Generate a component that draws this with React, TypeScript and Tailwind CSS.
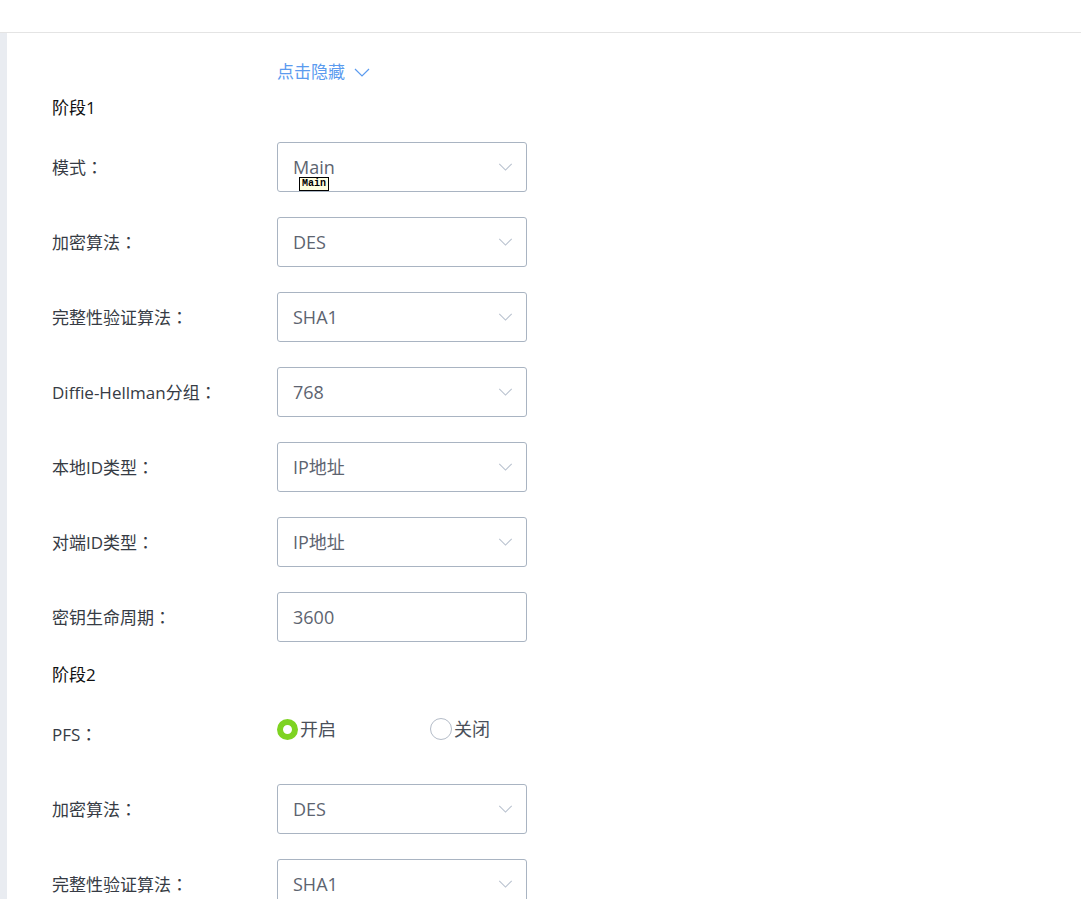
import React from 'react';

const font = { fontFamily: '"Open Sans", "Noto Sans CJK SC", sans-serif' };

const Chevron = ({ className }: { className?: string }) => (
  <svg viewBox="0 0 16 9" className={className} fill="none" stroke="currentColor" strokeWidth="1.2">
    <path d="M1 1l7 7 7-7" />
  </svg>
);

// full-width colon with centred dots, as in the reference
const Colon = () => <span className="font-['Noto_Sans_CJK_TC',sans-serif]">：</span>;

const SelectBox = (props: { value: string; arrow?: boolean; tip?: boolean }) => (
  <div className="relative flex h-[50px] w-[250px] items-center rounded-[3px] border border-[#a9b4c2] bg-white pr-[13px] pl-[15px]">
    <span className="flex-1 text-[18px] leading-[24px] text-[#5d6470]">{props.value}</span>
    {props.arrow !== false && <Chevron className="h-[8px] w-[15px] text-[#b9c2cf]" />}
    {props.tip && (
      <span className="absolute top-[34px] left-[21px] border border-black bg-[#ffffe1] px-[2px] font-['Liberation_Mono',monospace] text-[10px] leading-[12px] font-bold text-black">
        Main
      </span>
    )}
  </div>
);

const Row = (props: { label: string; children: React.ReactNode }) => (
  <div className="mt-[25px] flex h-[50px] items-center">
    <div className="w-[225px] text-[17px] leading-[22px] text-[#363b44]">
      {props.label}
      <Colon />
    </div>
    {props.children}
  </div>
);

export default function App() {
  return (
    <div className="min-h-[899px] bg-white" style={font}>
      <div className="h-[33px] border-b border-[#e4e4e4] bg-white" />
      <div className="flex min-h-[866px]">
        <div className="w-[7px] bg-[#e9ecf1]" />
        <div className="flex-1 pl-[45px]">
          <div className="flex items-center pt-[28px] pl-[225px] text-[17px] leading-[22px] text-[#5b9bef]">
            点击隐藏
            <Chevron className="ml-[9px] h-[9px] w-[16px]" />
          </div>
          <div className="mt-[14px] text-[17px] leading-[22px] text-[#111]">阶段1</div>
          <div className="-mt-[2px]">
            <Row label="模式">
              <SelectBox value="Main" tip />
            </Row>
            <Row label="加密算法">
              <SelectBox value="DES" />
            </Row>
            <Row label="完整性验证算法">
              <SelectBox value="SHA1" />
            </Row>
            <Row label="Diffie-Hellman分组">
              <SelectBox value="768" />
            </Row>
            <Row label="本地ID类型">
              <SelectBox value="IP地址" />
            </Row>
            <Row label="对端ID类型">
              <SelectBox value="IP地址" />
            </Row>
            <Row label="密钥生命周期">
              <SelectBox value="3600" arrow={false} />
            </Row>
          </div>
          <div className="mt-[22px] text-[17px] leading-[22px] text-[#111]">阶段2</div>
          <div className="mt-[23px] flex h-[50px] items-center">
            <div className="w-[225px] text-[17px] leading-[22px] text-[#363b44]">
              PFS
              <Colon />
            </div>
            <div className="flex -translate-y-[5px] items-center text-[18px] leading-[22px] text-[#4a505a]">
              <label className="flex w-[153px] items-center">
                <span className="h-[21px] w-[21px] rounded-full border-[6px] border-[#7ed321] bg-white" />
                <span className="ml-[2px]">开启</span>
              </label>
              <label className="flex items-center">
                <span className="h-[22px] w-[22px] rounded-full border-[1.5px] border-[#b4bcc8] bg-white" />
                <span className="ml-[2px]">关闭</span>
              </label>
            </div>
          </div>
          <Row label="加密算法">
            <SelectBox value="DES" />
          </Row>
          <Row label="完整性验证算法">
            <SelectBox value="SHA1" />
          </Row>
        </div>
      </div>
    </div>
  );
}
